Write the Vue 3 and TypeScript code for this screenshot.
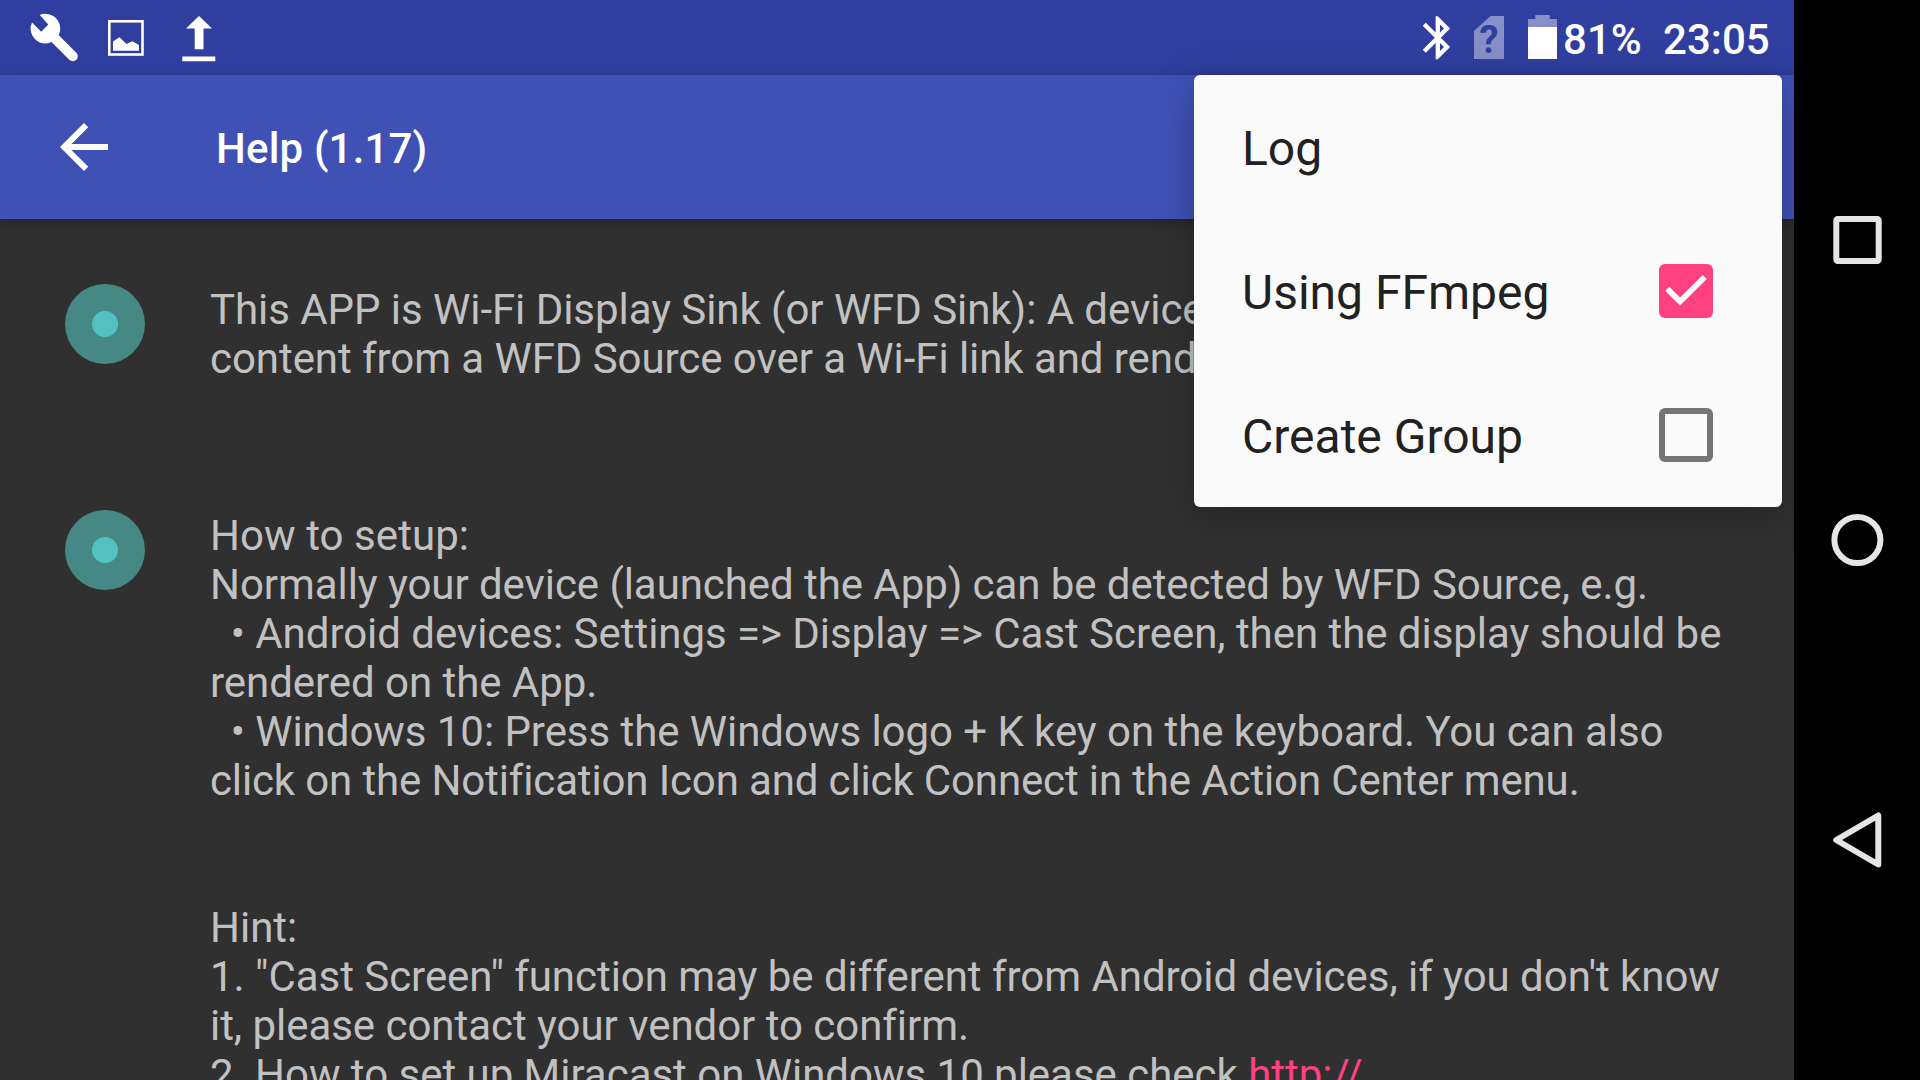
<script setup lang="ts">
import { ref } from 'vue';

interface MenuItem {
  label: string;
  checkable: boolean;
  checked: boolean;
}

interface Line {
  text: string;
  spacing: number;
  link?: string;
}

const menu = ref<MenuItem[]>([
  { label: "Log", checkable: false, checked: false },
  { label: "Using FFmpeg", checkable: true, checked: true },
  { label: "Create Group", checkable: true, checked: false },
]);

// spacing is the letter spacing of the line in px
const entries: Line[][] = [
  [
    { text: "This APP is Wi-Fi Display Sink (or WFD Sink): A device", spacing: -0.05 },
    { text: "content from a WFD Source over a Wi-Fi link and renders", spacing: -0.06 },
  ],
  [
    { text: "How to setup:", spacing: 0.07 },
    { text: "Normally your device (launched the App) can be detected by WFD Source, e.g.", spacing: -0.066 },
    { text: "  • Android devices: Settings => Display => Cast Screen, then the display should be", spacing: -0.045 },
    { text: "rendered on the App.", spacing: -0.05 },
    { text: "  • Windows 10: Press the Windows logo + K key on the keyboard. You can also", spacing: -0.05 },
    { text: "click on the Notification Icon and click Connect in the Action Center menu.", spacing: -0.137 },
    { text: "", spacing: 0 },
    { text: "", spacing: 0 },
    { text: "Hint:", spacing: 0 },
    { text: "1. \"Cast Screen\" function may be different from Android devices, if you don't know", spacing: -0.037 },
    { text: "it, please contact your vendor to confirm.", spacing: -0.04 },
    { text: "2. How to set up Miracast on Windows 10 please check ", spacing: -0.02, link: "http://" },
  ],
];

const toggle = (item: MenuItem) => {
  if (item.checkable) {
    item.checked = !item.checked;
  }
}
</script>

<template>
  <div class="device">
    <div class="screen">
      <header class="status">
        <div class="notifications">
          <svg class="wrench" width="52" height="52" viewBox="28 12 52 52">
            <path d="M39.7 15A14.8 14.8 0 1 1 32 22.4L41.2 31.7 48.3 24.6Z" fill="#fff" />
            <path d="M50 33.5 72.8 56.2" stroke="#fff" stroke-width="10" stroke-linecap="round" />
          </svg>
          <svg class="picture" width="36" height="36" viewBox="0 0 36 36">
            <rect x="1.3" y="1.3" width="33.2" height="33.2" fill="none" stroke="#fff" stroke-width="2.6" />
            <path d="M5 21.5 11.5 17.2 18.5 24 24.3 21.3 31 25V30.7H5Z" fill="#fff" />
          </svg>
          <svg class="upload" width="34" height="46" viewBox="0 0 34 46">
            <path d="M17 0 30 12.5H21.5V33.2H12.7V12.5H4Z M.3 40.5H33.3V45.3H.3Z" fill="#fff" />
          </svg>
        </div>
        <div class="system">
          <svg class="bluetooth" width="51.6" height="51.6" viewBox="0 0 24 24">
            <path fill="#fff" d="M17.71 7.71L12 2h-1v7.59L6.41 5 5 6.41 10.59 12 5 17.59 6.41 19 11 14.41V22h1l5.71-5.71-4.3-4.29 4.3-4.29zM13 5.83l1.88 1.88L13 9.59V5.83zm1.88 10.46L13 18.17v-3.76l1.88 1.88z" />
          </svg>
          <svg class="sim" width="30" height="43" viewBox="0 0 30 43">
            <path d="M16.5 0H30V43H0V15Z" fill="#878fc8" />
            <text x="15" y="37.2" text-anchor="middle">?</text>
          </svg>
          <svg class="battery" width="29" height="44" viewBox="0 0 29 44">
            <path d="M7.3 0H21.7V4H29V12H0V4H7.3Z" fill="#878fc8" />
            <path d="M0 12H29V44H0Z" fill="#fff" />
          </svg>
          <span class="percent">81%</span>
          <span class="clock">23:05</span>
        </div>
      </header>

      <div class="toolbar">
        <svg width="72" height="72" viewBox="0 0 24 24">
          <path fill="#fff" d="M20 11H7.83l5.59-5.59L12 4l-8 8 8 8 1.41-1.41L7.83 13H20v-2z" />
        </svg>
        <h1>Help (1.17)</h1>
      </div>

      <main class="content">
        <section v-for="(lines, n) in entries" :key="n" class="entry">
          <span class="dot"></span>
          <div class="text">
            <p v-for="(line, i) in lines" :key="i" :style="{ letterSpacing: line.spacing + 'px' }">{{ line.text }}<a v-if="line.link">{{ line.link }}</a></p>
          </div>
        </section>
      </main>

      <div class="menu">
        <div v-for="item in menu" :key="item.label" class="item" @click="toggle(item)">
          <span>{{ item.label }}</span>
          <span v-if="item.checkable" class="box" :class="{ checked: item.checked }">
            <svg v-if="item.checked" width="54" height="54" viewBox="0 0 54 54">
              <path d="M8.2 24.7 21 37.5 45.8 13" fill="none" stroke="#fafafa" stroke-width="5.8" />
            </svg>
          </span>
        </div>
      </div>
    </div>

    <nav class="nav">
      <svg width="60" height="60" viewBox="0 0 60 60">
        <rect x="9.3" y="9" width="42.4" height="42" rx="1.5" />
      </svg>
      <svg width="60" height="60" viewBox="0 0 60 60">
        <circle cx="30.4" cy="30" r="23" />
      </svg>
      <svg width="60" height="60" viewBox="0 0 60 60">
        <path d="M51.3 5.5V54.5L9.2 30Z" stroke-linejoin="round" />
      </svg>
    </nav>
  </div>
</template>

<style>
body {
  margin: 0;
  overflow: hidden;
  background: #000;
}
</style>

<style scoped>
.device {
  display: flex;
  width: 1920px;
  height: 1080px;
  overflow: hidden;
  font-family: Roboto, sans-serif;
}
.screen {
  position: relative;
  display: flex;
  flex-direction: column;
  width: 1794px;
  height: 1080px;
  overflow: hidden;
  background: #303030;
}
svg {
  display: block;
  flex: none;
}

.status {
  display: flex;
  justify-content: space-between;
  flex: none;
  height: 75px;
  background: #303f9f;
  color: #fff;
  font-size: 42px;
  font-weight: 500;
  line-height: 49px;
}
.notifications {
  display: flex;
  align-items: flex-start;
  padding-left: 28px;
}
.wrench {
  margin-top: 12px;
}
.picture {
  margin: 20px 0 0 28px;
}
.upload {
  margin: 16px 0 0 37.5px;
}
.system {
  display: flex;
  align-items: flex-start;
  width: 382px;
}
.bluetooth {
  margin-top: 11.7px;
}
.sim {
  margin: 16px 0 0 10.5px;
}
.sim text {
  font-size: 38px;
  font-weight: 700;
  fill: #303f9f;
}
.battery {
  margin: 15px 0 0 24px;
}
.percent {
  width: 100px;
  margin: 15px 0 0 6px;
}
.clock {
  margin-top: 15px;
}

.toolbar {
  z-index: 1;
  display: flex;
  align-items: center;
  flex: none;
  height: 144px;
  padding-left: 48px;
  background: #3f51b5;
  box-shadow: 0 3px 12px rgba(0, 0, 0, 0.28);
}
.toolbar h1 {
  margin: 2px 0 0 96px;
  color: #fff;
  font-size: 42px;
  font-weight: 500;
  line-height: 49px;
  letter-spacing: 0.17px;
}

.content {
  display: flex;
  flex-direction: column;
  gap: 128px;
  padding-top: 66px;
}
.entry {
  display: flex;
  padding-left: 65px;
}
.dot {
  flex: none;
  width: 80px;
  height: 80px;
  margin-top: -1px;
  border-radius: 50%;
  background: radial-gradient(circle, #52c1bf 12.5px, #468884 13.5px);
}
.text {
  margin-left: 65px;
  color: #c1c1c1;
  font-size: 42px;
  line-height: 49px;
  white-space: pre;
}
.text p {
  height: 49px;
  margin: 0;
}
.text a {
  color: #ff4081;
  text-decoration: underline;
}

.menu {
  position: absolute;
  top: 75px;
  left: 1194px;
  z-index: 2;
  width: 588px;
  border-radius: 6px;
  background: #fafafa;
  box-shadow: 0 10px 40px rgba(0, 0, 0, 0.25);
}
.item {
  display: flex;
  align-items: center;
  justify-content: space-between;
  height: 144px;
  padding: 0 69px 0 48px;
  color: #212121;
  font-size: 48px;
}
.item > span:first-child {
  padding-top: 2px;
}
.box {
  box-sizing: border-box;
  width: 54px;
  height: 54px;
  border: 6px solid #757575;
  border-radius: 6px;
}
.box.checked {
  border: none;
  background: #ff4081;
}

.nav {
  display: flex;
  flex-direction: column;
  align-items: center;
  gap: 240px;
  box-sizing: border-box;
  width: 126px;
  padding-top: 210px;
  background: #000;
}
.nav svg {
  fill: none;
  stroke: #e5e5e5;
  stroke-width: 6;
}
</style>
